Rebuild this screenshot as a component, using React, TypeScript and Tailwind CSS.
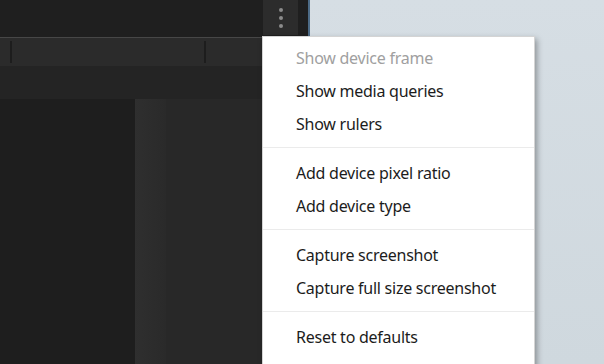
const groups: { label: string; disabled?: boolean }[][] = [
  [
    { label: "Show device frame", disabled: true },
    { label: "Show media queries" },
    { label: "Show rulers" },
  ],
  [{ label: "Add device pixel ratio" }, { label: "Add device type" }],
  [{ label: "Capture screenshot" }, { label: "Capture full size screenshot" }],
  [{ label: "Reset to defaults" }, { label: "Close DevTools" }],
];

const DeviceMenu = () => {
  return (
    <div className="absolute left-[262px] top-[36px] w-[273px] h-[340px] bg-white border border-[#d4d4d4] shadow-[2px_3px_6px_rgba(0,0,0,0.35)] pt-[5px]">
      {groups.map((group, gi) => (
        <div key={gi}>
          {gi > 0 && <div className="mt-[6px] mb-[9px] h-px bg-[#ebebeb]" />}
          {group.map((item) => (
            <div
              key={item.label}
              className={`h-[33px] leading-[33px] pl-[33px] text-[16px] tracking-[-0.25px] whitespace-nowrap ${
                item.disabled ? "text-[#a0a0a0]" : "text-[#1c1c1c]"
              }`}
            >
              {item.label}
            </div>
          ))}
        </div>
      ))}
    </div>
  );
};

export default function App() {
  return (
    <div
      className="relative flex w-[604px] h-[364px] overflow-hidden bg-[#cfd8de]"
      style={{ fontFamily: '"Noto Sans", "Open Sans", sans-serif' }}
    >
      {/* devtools window */}
      <div className="flex flex-col w-[310px] h-full bg-[#232323] border-r-2 border-[#4d6b86]">
        <div className="flex justify-end h-[37px] bg-[#1f1f1f] pr-[10px]">
          <button className="flex flex-col items-center justify-center gap-[4px] w-[35px] h-[35px] bg-[#2c2c2c]">
            <span className="w-[4px] h-[4px] rounded-full bg-[#8c8c8c]" />
            <span className="w-[4px] h-[4px] rounded-full bg-[#8c8c8c]" />
            <span className="w-[4px] h-[4px] rounded-full bg-[#8c8c8c]" />
          </button>
        </div>
        <div className="h-px bg-[#474747]" />
        <div className="flex items-center h-[28px] bg-[#2b2b2b]">
          <div className="w-[10px]" />
          <div className="w-[2px] h-[22px] bg-[#1d1d1d]" />
          <div className="w-[192px]" />
          <div className="w-[2px] h-[22px] bg-[#1d1d1d]" />
        </div>
        <div className="h-[33px] bg-[#242424]" />
        <div className="flex flex-1">
          <div className="w-[135px] bg-[#1e1e1e]" />
          <div className="w-[31px] bg-gradient-to-r from-[#2f2f2f] to-[#2a2a2a]" />
          <div className="flex-1 bg-[#282828]" />
        </div>
      </div>
      <div className="flex-1 bg-gradient-to-b from-[#d6dee4] to-[#cfd8de]" />
      <DeviceMenu />
    </div>
  );
}
